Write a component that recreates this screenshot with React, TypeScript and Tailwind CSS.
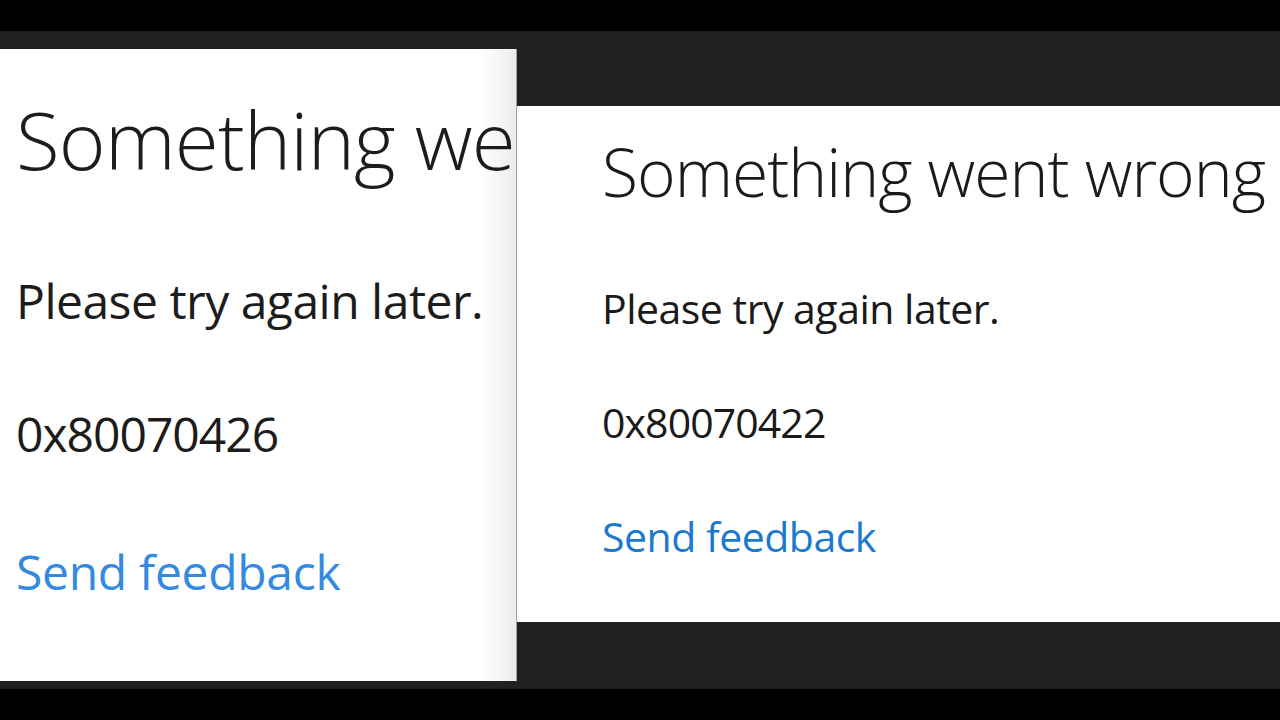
import React from "react";

export default function App() {
  return (
    <div className="flex h-[720px] w-[1280px] flex-col overflow-hidden bg-black font-['Open_Sans',sans-serif]">
      <div className="h-[31px] shrink-0" />
      <div className="flex h-[658px] shrink-0 bg-[#212121]">
        {/* Left (zoomed) dialog */}
        <div className="flex w-[517px] shrink-0 flex-col">
          <div className="h-[18px] shrink-0" />
          <div className="h-[632px] shrink-0 overflow-hidden border-r border-[#a0a0a0] bg-linear-to-r from-white from-[93%] to-[#ececec] pl-[16px]">
            <div className="mt-[50px] whitespace-nowrap text-[80px] font-light leading-none tracking-[-0.8px] text-[#1c1c1c]">
              Something went wrong
            </div>
            <div className="mt-[98px] whitespace-nowrap text-[48px] leading-none tracking-[-0.5px] text-[#1c1c1c]">
              Please try again later.
            </div>
            <div className="mt-[85px] whitespace-nowrap text-[48px] leading-none tracking-[-1px] text-[#1c1c1c]">
              0x80070426
            </div>
            <div className="mt-[90px] whitespace-nowrap text-[48px] leading-none tracking-[-0.3px] text-[#3489e0]">
              Send feedback
            </div>
          </div>
        </div>
        {/* Right dialog */}
        <div className="flex min-w-0 flex-1 flex-col">
          <div className="h-[75px] shrink-0" />
          <div className="h-[516px] shrink-0 overflow-hidden bg-white pl-[85px]">
            <div className="mt-[32px] whitespace-nowrap text-[66px] font-light leading-none tracking-[-1px] text-[#1a1a1a]">
              Something went wrong
            </div>
            <div className="mt-[84px] whitespace-nowrap text-[41px] leading-none tracking-[-0.5px] text-[#1a1a1a]">
              Please try again later.
            </div>
            <div className="mt-[73px] whitespace-nowrap text-[41px] leading-none tracking-[-0.9px] text-[#1a1a1a]">
              0x80070422
            </div>
            <div className="mt-[73px] whitespace-nowrap text-[41px] leading-none tracking-[-0.5px] text-[#1c7ace]">
              Send feedback
            </div>
          </div>
        </div>
      </div>
    </div>
  );
}
